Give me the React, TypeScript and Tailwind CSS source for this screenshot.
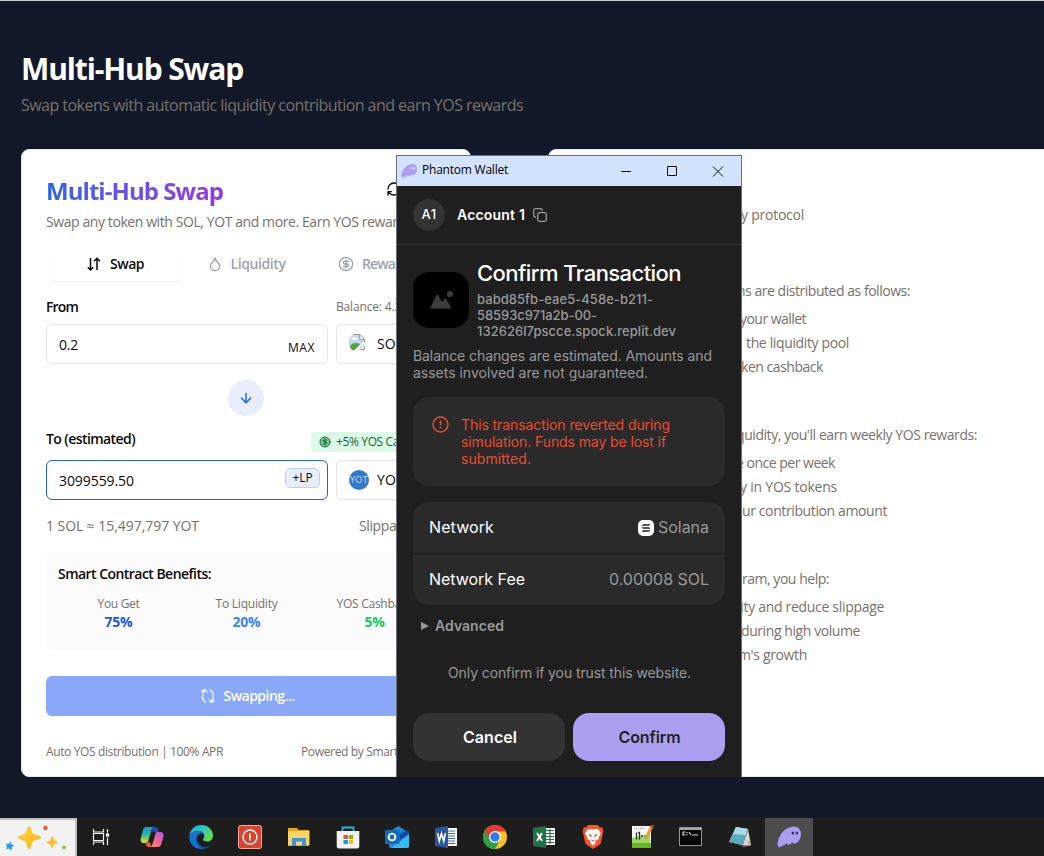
import { useLayoutEffect, useRef, useState } from "react";
import type { ReactNode } from "react";
import { ArrowDown, CircleDollarSign, Droplet } from "lucide-react";

/* Single line of text tracked so that it spans the given width in pixels. */
function Fit({ w, className = "", children }: { w: number; className?: string; children: string }) {
  const ref = useRef<HTMLSpanElement>(null);
  const [spacing, setSpacing] = useState<number | null>(null);
  useLayoutEffect(() => {
    if (ref.current && spacing === null) {
      const natural = ref.current.getBoundingClientRect().width;
      setSpacing((w - natural) / children.length);
    }
  }, [w, children, spacing]);
  return (
    <span
      ref={ref}
      className={`inline-block shrink-0 whitespace-nowrap ${className}`}
      style={spacing === null ? undefined : { letterSpacing: `${spacing}px` }}
    >
      {children}
    </span>
  );
}

function Ghost({ className, eye }: { className: string; eye: string }) {
  return (
    <svg viewBox="0 0 24 24" className={className}>
      <path
        d="M2 22C-.5 21 .5 15.500 3 11 6 5 12 1.500 17 1.500c4 0 7 3 7 7.500 0 5-3.500 9.500-6.500 9.500-1.200 0-1.800-.6-2-1.500-1 1.500-2.300 2.800-3.800 2.800-1.300 0-2-.8-2-1.800C8 20.200 6.500 21 5.300 20.200 4.500 21.500 3.300 22.500 2 22Z"
        fill="#ab9ff2"
      />
      <ellipse cx="15.800" cy="8" rx="1.200" ry="1.600" fill={eye} />
      <ellipse cx="19.800" cy="8" rx="1.200" ry="1.600" fill={eye} />
    </svg>
  );
}

function Benefit({ label, w, value, vw, color }: { label: string; w: number; value: string; vw: number; color: string }) {
  return (
    <div className="flex flex-col items-center pl-px">
      <Fit w={w} className="text-xs leading-4 text-[#78716c]">{label}</Fit>
      <Fit w={vw} className={`text-sm leading-5 font-bold ${color}`}>{value}</Fit>
    </div>
  );
}

function SwapCard() {
  return (
    <section className="flex h-[628px] w-[450px] shrink-0 flex-col rounded-lg border border-[#e2e8f0] bg-white px-6 pt-[25px] text-[#0c0a09]">
      <div className="flex h-8 items-center justify-between">
        <Fit w={177} className="bg-gradient-to-r from-[#2563eb] to-[#9333ea] bg-clip-text text-2xl leading-8 font-bold text-transparent">
          Multi-Hub Swap
        </Fit>
        <svg viewBox="0 0 24 24" className="mr-[44px] mb-1 h-4 w-4" fill="none" stroke="#0c0a09" strokeWidth="2" strokeLinecap="round" strokeLinejoin="round">
          <path d="M3 12a9 9 0 0 1 9-9 9.750 9.750 0 0 1 6.740 2.740L21 8M21 3v5h-5M21 12a9 9 0 0 1-9 9 9.750 9.750 0 0 1-6.740-2.740L3 16M8 16H3v5" />
        </svg>
      </div>
      <Fit w={366} className="mt-[5px] self-start text-sm leading-5 text-[#78716c]">
        Swap any token with SOL, YOT and more. Earn YOS rewards
      </Fit>

      <div className="mt-[15px] grid h-[34px] grid-cols-[132px_132px_132px] px-1 text-sm font-semibold text-[#9ca3af]">
        <div className="flex items-center justify-center gap-2 rounded-sm bg-white pr-0.5 text-[#0c0a09] shadow-[0_1px_2px_rgba(0,0,0,0.06)]">
          <svg viewBox="0 0 16 16" className="h-4 w-4" fill="none" stroke="currentColor" strokeWidth="1.500">
            <path d="M4.500 2v12M1.800 11.300 4.500 14l2.700-2.700M11 14V2.500M8 5.200l3-2.900 3 2.900" />
          </svg>
          <Fit w={34}>Swap</Fit>
        </div>
        <div className="flex items-center justify-center gap-2 pr-3 pl-2">
          <Droplet className="h-4 w-4" />
          <Fit w={55}>Liquidity</Fit>
        </div>
        <div className="flex items-center justify-center gap-2 pr-2">
          <CircleDollarSign className="h-4 w-4" />
          <Fit w={52}>Rewards</Fit>
        </div>
      </div>

      <div className="mt-4 flex h-5 items-center justify-between">
        <Fit w={32} className="text-sm font-semibold">From</Fit>
        <Fit w={110} className="text-xs text-[#78716c]">Balance: 4.3571 SOL</Fit>
      </div>
      <div className="mt-[7px] grid h-10 grid-cols-[282px_110px] gap-2">
        <div className="flex items-center justify-between rounded-md border border-[#e5e5e5] px-3 text-sm">
          <Fit w={19} className="pt-0.5">0.2</Fit>
          <Fit w={27} className="pt-2 text-xs font-medium">MAX</Fit>
        </div>
        <div className="flex items-center gap-3 rounded-md border border-[#e5e5e5] px-3 text-sm">
          <svg viewBox="0 0 16 16" className="-mt-1 h-4 w-4">
            <path d="M3 1h8l4.500 4v6L11 16H3L0 12V5Z" fill="#c3d5f2" />
            <path d="M1 13c.6-3.500 5-5 8.500-3.500l1.500 1L6 16H3Z" fill="#4fa52e" />
            <path d="m10.500.5.3 5 5-.3Z" fill="#f8f8f8" stroke="#8b8b8b" strokeWidth=".8" />
            <path d="M4 .5h7M15.500 5v4M11.500 15.500h4V12" fill="none" stroke="#9a9a9a" />
            <ellipse cx="5.500" cy="4.500" rx="3" ry="1.500" fill="white" />
            <path d="m16 8.500-7 7.500H6L14 8Z" fill="white" />
          </svg>
          <Fit w={26}>SOL</Fit>
        </div>
      </div>

      <div className="mt-4 flex h-9 w-9 items-center justify-center self-center rounded-full bg-[#e8eefe]">
        <ArrowDown className="h-4 w-4 text-[#1a5af5]" />
      </div>

      <div className="mt-[13px] flex h-5 items-center justify-between">
        <Fit w={89} className="text-sm font-semibold">To (estimated)</Fit>
        <div className="mt-[6px] flex h-5 w-[135px] items-center gap-[5px] rounded-sm bg-[#dcfce7] pl-2 text-[#166534]">
          <CircleDollarSign className="h-3 w-3 shrink-0" fill="#86c9a0" />
          <Fit w={100} className="text-xs">+5% YOS Cashback</Fit>
        </div>
      </div>
      <div className="mt-[11px] grid h-10 grid-cols-[282px_110px] gap-2">
        <div className="flex items-center justify-between rounded-md border border-[#2560e8] pr-[7px] pl-3 text-sm">
          <Fit w={75} className="pt-0.5">3099559.50</Fit>
          <div className="-mt-1 flex h-5 w-[35px] items-center justify-center rounded-md border border-[#bacdfc] bg-[#e8eefe] text-xs">
            <Fit w={20}>+LP</Fit>
          </div>
        </div>
        <div className="flex items-center gap-2 rounded-md border border-[#e5e5e5] px-3 text-sm">
          <div className="flex h-5 w-5 shrink-0 items-center justify-center overflow-hidden rounded-full bg-[#3178cf] text-[9px] text-[#c5e0ff]">
            <Fit w={18}>YOT</Fit>
          </div>
          <Fit w={27}>YOT</Fit>
        </div>
      </div>
      <div className="mt-4 flex h-5 items-center justify-between pr-[35px] text-sm text-[#78716c]">
        <Fit w={153}>1 SOL ≈ 15,497,797 YOT</Fit>
        <Fit w={52}>Slippage</Fit>
      </div>

      <div className="mt-4 flex h-[99px] shrink-0 flex-col items-start rounded-lg bg-[#fcfcfc] px-3 pt-3">
        <Fit w={153} className="text-sm leading-5 font-semibold">Smart Contract Benefits:</Fit>
        <div className="mt-3 grid grid-cols-[120px_120px_120px] gap-2">
          <Benefit label="You Get" w={42} value="75%" vw={28} color="text-[#1a56e8]" />
          <Benefit label="To Liquidity" w={62} value="20%" vw={28} color="text-[#3b82f6]" />
          <Benefit label="YOS Cashback" w={76} value="5%" vw={20} color="text-[#22c55e]" />
        </div>
      </div>

      <div className="mt-[25px] flex h-10 shrink-0 items-center justify-center gap-2 rounded-md bg-[#89a8f9] pl-0.5 text-sm font-semibold text-white">
        <svg viewBox="0 0 16 16" className="h-4 w-4 opacity-80" fill="none" stroke="currentColor" strokeWidth="1.500">
          <path d="M6 14.500C1.500 12.500 1.500 6 4.500 2.500M1.500 3.500l3.300-2 2.200 3M9.500 2c4.500 1.500 5 8 2 11.500M14.500 12.500l-3.300 2-2.200-3" />
        </svg>
        <Fit w={71}>Swapping...</Fit>
      </div>
      <div className="mt-7 flex h-4 items-center justify-between text-xs text-[#78716c]">
        <Fit w={177}>Auto YOS distribution | 100% APR</Fit>
        <Fit w={145}>Powered by Smart Contract</Fit>
      </div>
    </section>
  );
}

type Part = { text: string; w: number; end: string };

const intro: Part[] = [{ text: "y protocol", w: 63, end: "w-[255px]" }];
const distribution: Part[] = [
  { text: "your wallet", w: 66, end: "w-[257px]" },
  { text: "the liquidity pool", w: 103, end: "w-[300px]" },
  { text: "ken cashback", w: 82, end: "w-[274px]" },
];
const weekly: Part[] = [
  { text: "e once per week", w: 99, end: "w-[286px]" },
  { text: "y in YOS tokens", w: 97, end: "w-[288px]" },
  { text: "ur contribution amount", w: 145, end: "w-[338px]" },
];
const support: Part[] = [
  { text: "lity and reduce slippage", w: 147, end: "w-[335px]" },
  { text: "during high volume", w: 119, end: "w-[311px]" },
  { text: "m's growth", w: 69, end: "w-[258px]" },
];

function Rows({ parts }: { parts: Part[] }) {
  return (
    <>
      {parts.map((p) => (
        <div key={p.text} className={`flex h-6 items-center justify-end ${p.end}`}>
          <Fit w={p.w}>{p.text}</Fit>
        </div>
      ))}
    </>
  );
}

function InfoCard() {
  return (
    <section className="h-[628px] w-[520px] shrink-0 rounded-lg border border-[#e2e8f0] bg-white pt-[53px] text-sm text-[#78716c]">
      <Rows parts={intro} />
      <div className="mt-[52px] flex h-6 w-[361px] items-center justify-end">
        <Fit w={173}>ns are distributed as follows:</Fit>
      </div>
      <div className="mt-1"><Rows parts={distribution} /></div>
      <div className="mt-11 flex h-6 w-[428px] items-center justify-end">
        <Fit w={241}>quidity, you'll earn weekly YOS rewards:</Fit>
      </div>
      <div className="mt-1"><Rows parts={weekly} /></div>
      <div className="mt-11 flex h-6 w-[280px] items-center justify-end">
        <Fit w={87}>ram, you help:</Fit>
      </div>
      <div className="mt-1"><Rows parts={support} /></div>
    </section>
  );
}

function WalletWindow() {
  return (
    <div className="absolute top-[154px] left-[396px] flex h-[622px] w-[346px] flex-col border-x border-t border-[#6b6f76] bg-[#1f1f1f] font-['Inter',sans-serif]">
      <div className="flex h-[30px] shrink-0 items-center bg-[#d3e2fd] pl-1 font-['Open_Sans',sans-serif] text-xs text-black">
        <Ghost className="h-4 w-4" eye="#ece9ff" />
        <Fit w={86} className="-mt-0.5 ml-[5px]">Phantom Wallet</Fit>
        <svg viewBox="0 0 120 12" className="ml-[110px] h-3 w-[120px]" fill="none" stroke="#111">
          <path d="M3 6.500h10M49.500 1.500h9v9h-9zM95 1.500l10 10M105 1.500l-10 10" />
        </svg>
      </div>
      <div className="flex h-[59px] shrink-0 items-center border-b border-[#333333] pl-4">
        <div className="flex h-8 w-8 items-center justify-center rounded-full bg-[#333333] text-[13px] font-medium text-white">
          <Fit w={15}>A1</Fit>
        </div>
        <Fit w={68} className="ml-3 text-sm font-semibold text-white">Account 1</Fit>
        <svg viewBox="0 0 14 14" className="ml-2 h-3.5 w-3.5" fill="none" stroke="#999" strokeWidth="1.300">
          <rect x="4.700" y="4.700" width="8.600" height="8.600" rx="1.800" />
          <path d="M3 9.200h-.5A1.800 1.800 0 0 1 .7 7.400V2.500A1.800 1.800 0 0 1 2.500.7h4.900a1.800 1.800 0 0 1 1.800 1.800V3" />
        </svg>
      </div>

      <div className="flex flex-1 flex-col px-4">
        <div className="flex gap-2 pt-[15px]">
          <div className="mt-3 flex h-14 w-14 shrink-0 items-center justify-center rounded-2xl bg-black">
            <svg viewBox="0 0 24 20" className="h-5 w-6" fill="#3d3d3d">
              <path d="M1 18.500 7.500 5c.5-.8 1-.8 1.500 0l4 7 2.500-3c.6-.7 1.100-.7 1.600 0l5.400 9.500Z" />
              <circle cx="21" cy="4" r="3" />
            </svg>
          </div>
          <div className="flex flex-col text-[13px] leading-4 font-medium text-[#999999]">
            <Fit w={204} className="h-[31px] text-[22px] leading-[27px] text-white">Confirm Transaction</Fit>
            <Fit w={176} className="self-start">babd85fb-eae5-458e-b211-</Fit>
            <Fit w={120} className="self-start">58593c971a2b-00-</Fit>
            <Fit w={199} className="self-start">132626l7pscce.spock.replit.dev</Fit>
          </div>
        </div>
        <div className="mt-2 flex flex-col items-start text-sm leading-[17px] text-[#999999]">
          <Fit w={299}>Balance changes are estimated. Amounts and</Fit>
          <Fit w={235}>assets involved are not guaranteed.</Fit>
        </div>

        <div className="mt-4 flex h-[89px] gap-3 rounded-2xl bg-[#2a2a2a] pt-[19px] pl-[19px]">
          <svg viewBox="0 0 17 17" className="h-[17px] w-[17px] shrink-0" fill="none" stroke="#eb4a30" strokeWidth="1.500">
            <circle cx="8.500" cy="8.500" r="7.500" />
            <path d="M8.500 4.500v4.700M8.500 10.800v1.700" strokeWidth="1.700" />
          </svg>
          <div className="flex flex-col items-start text-sm leading-[17px] text-[#eb4a30]">
            <Fit w={209}>This transaction reverted during</Fit>
            <Fit w={205}>simulation. Funds may be lost if</Fit>
            <Fit w={70}>submitted.</Fit>
          </div>
        </div>

        <div className="mt-4 h-[103px] shrink-0 overflow-hidden rounded-2xl bg-[#2a2a2a] text-base">
          <div className="flex h-[52px] items-center justify-between border-b border-[#1f1f1f] px-4 pb-0.5">
            <Fit w={65} className="text-white">Network</Fit>
            <div className="flex items-center gap-1">
              <svg viewBox="0 0 16 16" className="mt-0.5 h-4 w-4">
                <rect width="16" height="16" rx="5" fill="white" />
                <path d="M5 4.200h7.500L11 5.700H3.500ZM3.500 7.200H11l1.500 1.500H5ZM5 10.200h7.500L11 11.700H3.500Z" fill="#222" />
              </svg>
              <Fit w={51} className="text-[#999999]">Solana</Fit>
            </div>
          </div>
          <div className="flex h-[51px] items-center justify-between px-4 pb-0.5">
            <Fit w={96} className="text-white">Network Fee</Fit>
            <Fit w={100} className="text-[#999999]">0.00008 SOL</Fit>
          </div>
        </div>

        <div className="mt-[11px] flex h-5 items-center gap-1.5 pl-2 text-sm font-semibold text-[#999999]">
          <svg viewBox="0 0 8 8" className="h-2 w-2" fill="#999"><path d="M0 0l8 4-8 4Z" /></svg>
          <Fit w={69}>Advanced</Fit>
        </div>
        <Fit w={243} className="mt-[27px] ml-px self-center text-sm leading-5 text-[#999999]">
          Only confirm if you trust this website.
        </Fit>
        <div className="mt-[30px] grid h-12 shrink-0 grid-cols-2 gap-2 text-base font-semibold">
          <button className="rounded-2xl bg-[#333333] pl-0.5 text-white"><Fit w={54}>Cancel</Fit></button>
          <button className="rounded-2xl bg-[#ab9ff2] pl-px text-[#1f1f1f]"><Fit w={62}>Confirm</Fit></button>
        </div>
      </div>
    </div>
  );
}

function Ic({ children, className = "w-[49px]" }: { children: ReactNode; className?: string }) {
  return (
    <div className={`flex shrink-0 items-center justify-center ${className}`}>
      <svg viewBox="0 0 24 24" className="h-6 w-6">{children}</svg>
    </div>
  );
}

function Taskbar() {
  return (
    <div className="mt-[41px] flex h-[38px] shrink-0 bg-[#1d1d1d]">
      <div className="w-[77px] shrink-0 border-t-2 border-r-2 border-[#c0c0c0] bg-[#f2f2f2]">
        <svg viewBox="0 0 75 36" className="h-9 w-[75px]">
          <defs>
            <linearGradient id="star" x1="0" y1="0" x2="1" y2="1">
              <stop offset="0" stopColor="#ffd94a" />
              <stop offset="1" stopColor="#f7b00c" />
            </linearGradient>
          </defs>
          <path d="M29 6c2.200 0 2.200 6 4 7.500 2 1.700 8 2 8 4s-6 2-8 4-2 7.500-4 7.500-2-5.500-4-7.500-7-2-7-4 5-2.300 7-4S27 6 29 6Z" fill="url(#star)" />
          <path d="M52 16c1 0 1.500 3.500 2.500 4.500S58 21.500 58 22.300 55 23.500 54 24.500 53 28 52 28s-1-2.500-2-3.500-3.500-1-3.500-2 2.500-1.200 3.500-2 1-4.500 2-4.500Z" fill="#fbc12c" />
          <path d="m10.500 21.500.8 3 3 1-2.500 1.800-.3 3.200-2.500-2-3 .5 1.200-2.700-1.700-2.600 3.300.2Z" fill="#19a3ea" />
          <circle cx="45.500" cy="8" r="2.200" fill="#ee5a2b" />
          <circle cx="64" cy="27.500" r="2" fill="#8bc53f" />
        </svg>
      </div>
      <Ic className="w-[48px]">
        <path d="M4.500 4v3h10V4M4.500 20v-3h10v3M4.500 8.500h10v7h-10zM18.500 4v16" fill="none" stroke="#f5f5f5" strokeWidth="1.200" />
        <path d="M16.500 8h4v4h-4z" fill="#fff" stroke="#1d1d1d" strokeWidth=".8" />
      </Ic>
      <Ic className="ml-[2px] w-[49px]">
        <defs>
          <linearGradient id="coA" x1="0" y1="0" x2="0" y2="1"><stop stopColor="#1c93ea" /><stop offset=".5" stopColor="#2fb89a" /><stop offset="1" stopColor="#f0dc26" /></linearGradient>
          <linearGradient id="coB" x1="1" y1="0" x2="0" y2="1"><stop stopColor="#a45cf0" /><stop offset=".5" stopColor="#f0629a" /><stop offset="1" stopColor="#ff9a4a" /></linearGradient>
        </defs>
        <path d="M12.500 2H15c2 0 2.700 1 3.200 3l.6 2.500h-4c-1.500 0-2.300-1.200-2.700-3Z" fill="#1a4fc0" />
        <path d="M6 2h8c-1.300 0-2 1-2.500 3L8.500 15c-.7 2.300-1.500 3-3.500 3H4c-3 0-4-2-3.200-5L3 5c.6-2 1.300-3 3-3Z" fill="url(#coA)" />
        <path d="M11.500 22H9c-2 0-2.700-1-3.200-3l-.4-1c2 0 3 0 3.600-1.500l1.500 2Z" fill="#ee5a34" />
        <path d="M18 22h-8c1.300 0 2-1 2.500-3l3-10c.5-1.600 1-2 2.500-2h2.500c3 0 3.500 2.500 2.800 5l-2 7C20.700 21 19.700 22 18 22Z" fill="url(#coB)" />
      </Ic>
      <Ic>
        <defs>
          <linearGradient id="edA" x1="0" y1="0" x2="1" y2=".5"><stop stopColor="#1ba5dc" /><stop offset=".55" stopColor="#2dc6c4" /><stop offset="1" stopColor="#62dd4a" /></linearGradient>
        </defs>
        <path d="M.5 11C1 4.500 6 0 12 0c7 0 12 5 12 10.500 0 4-3 6-6 6-2.500 0-4.500-1-4-2.500 1-1 1.300-2 1.300-3C15.300 8 12.500 6 9 6 5 6 2 8 .5 11Z" fill="url(#edA)" />
        <path d="M.4 10.500C2 7.500 5 6 9 6c3 0 5 1.300 6 3-4-2-8 1-7.500 6 .5 5 4.500 8 8.500 8.300-1.200.5-2.600.7-4 .7C5 24-.5 18 .4 10.500Z" fill="#1273cf" />
        <path d="M9 11c-2 4 0 9 5 10.500 3 1 6 .2 8.500-2.500-2.500 4.500-7 5-8.500 4.800C9 22.500 7.500 19 7.500 15.500c0-1.500.5-3.300 1.500-4.500Z" fill="#0c4f9e" />
      </Ic>
      <Ic>
        <rect x=".5" y=".5" width="23" height="23" rx="2" fill="#d9432d" stroke="#f0ada0" />
        <circle cx="12" cy="12" r="7" fill="none" stroke="#fff" strokeWidth="1.400" />
        <path d="M12 8.500v7" stroke="#fff" strokeWidth="1.600" />
      </Ic>
      <Ic>
        <path d="M1 3h9l1.500 2H22v16H1z" fill="#e7a51c" />
        <path d="M1 6h21.500v14H1z" fill="#fcd462" />
        <path d="M5 21v-8h14v8h-4v-4.500H9V21z" fill="#3e92da" />
      </Ic>
      <Ic>
        <path d="M6.500 7V2.500h11V7" fill="none" stroke="#26b4e8" strokeWidth="1.800" />
        <path d="M.7 6h22.600v15a2.500 2.500 0 0 1-2.500 2.500H3.200A2.500 2.500 0 0 1 .7 21Z" fill="#f2f2f2" />
        <path d="M7.500 10H12v4H7.500z" fill="#f25022" /><path d="M13 10h4v4h-4z" fill="#7fba00" />
        <path d="M7.500 15H12v4H7.500z" fill="#00a4ef" /><path d="M13 15h4v4h-4z" fill="#ffb900" />
      </Ic>
      <Ic>
        <path d="M4 7 13.500 1 24 8v13a2 2 0 0 1-2 2H6a2 2 0 0 1-2-2Z" fill="#1c8ae0" />
        <path d="m14 9 9-4 1 4-9 6Z" fill="#134b9b" />
        <path d="M24 9.500V21a2 2 0 0 1-2 2H6Z" fill="#35bdf2" />
        <rect x="0" y="5" width="14.500" height="14" rx="1" fill="#0f6cbd" />
        <circle cx="7" cy="12" r="3.400" fill="none" stroke="#fff" strokeWidth="1.900" />
      </Ic>
      <Ic>
        <path d="M13 3h10v18H13z" fill="#fff" />
        <path d="M14 6h7M14 8.500h7M14 11h7M14 13.500h7M14 16h7M14 18.500h7" stroke="#4169ad" />
        <path d="M1 3 14 1v22L1 21Z" fill="#2b579a" />
        <path d="m3.500 8 1.800 8 2.200-7.500L9.700 16l1.800-8" fill="none" stroke="#fff" strokeWidth="1.600" />
      </Ic>
      <Ic>
        <circle cx="12" cy="12" r="12" fill="#fbc116" />
        <path d="M12 12 6.800 15 1.600 6A12 12 0 0 1 22.400 6L22.400 6.500H12Z" fill="#e33b2e" />
        <path d="M1.600 6A12 12 0 0 0 12 24l5.200-9H12L6.800 15Z" fill="#2aa147" />
        <circle cx="12" cy="12" r="6" fill="#fff" />
        <circle cx="12" cy="12" r="4.700" fill="#2f7de9" />
      </Ic>
      <Ic>
        <path d="M13 3h10v17H13z" fill="#fff" />
        <path d="M14 5.500h8M14 8.500h8M14 11.500h8M14 14.500h8M14 17.500h8M18 4v15" stroke="#217346" strokeWidth="1.200" />
        <path d="M1 3 14 1v22L1 21Z" fill="#217346" />
        <path d="m5 8 5 8M10 8l-5 8" stroke="#fff" strokeWidth="1.900" />
      </Ic>
      <Ic>
        <path d="M7 0h10l2 2.500 2-.3 1.300 3L22 8l-2.500 11L12 24l-7.500-5L2 8l-.3-2.800L3 2.200l2 .3Z" fill="#fb542b" />
        <path d="m6.500 4.500 3-.8 2.500.8 2.500-.8 3 .8 2.500 4-2.200 3.500.2 2-4 2 1 1.800L12 20.500l-3-2.700 1-1.800-4-2 .2-2L4 8.500Z" fill="#fff" />
        <path d="m7 9 3.500.8v3ZM17 9l-3.500.8v3ZM9.500 14.500l2.500.8 2.500-.8-2.500 2Z" fill="#fb542b" />
      </Ic>
      <Ic>
        <path d="M2 1h19v22H2z" fill="#fafafa" />
        <path d="M2 13 20 9v14H2Z" fill="#9bd86a" />
        <path d="M2 18h19v5H2z" fill="#66b61e" />
        <path d="M4 3.500h12" stroke="#bbb" strokeWidth="2" strokeDasharray="1 1" />
        <path d="M6.500 7.500v7M8 7.500h1.500v7M11 11h2M14.500 11h1" fill="none" stroke="#333" strokeWidth="1.300" />
        <path d="M21.500 2 15.500 14" stroke="#e6a020" strokeWidth="3" /><path d="m22.800 0-1.500 3" stroke="#d03b2a" strokeWidth="3" />
      </Ic>
      <Ic>
        <path d="M.5 2.500h22v18H.5z" fill="#050505" stroke="#969696" />
        <path d="M1 4h21" stroke="#ddd" strokeWidth="1.500" />
        <path d="M6.500 7H4v3h2.500M8 7v1M8 9v1M10 7l2 3M13 10h6" fill="none" stroke="#ddd" strokeWidth="1.200" />
      </Ic>
      <Ic>
        <path d="m8 2 12 2 3 16-4 1L1 17Z" fill="#d3d9dc" />
        <path d="m8 2 11.500 2-5 16L1 16.500Z" fill="#5aabc0" />
        <path d="m8 2 11.500 2-2 6L5 9Z" fill="#a7dce5" />
        <path d="m1 16.500 13.500 3.500 5.500-15M14 20l1 1.500 8-1.500" fill="none" stroke="#7c8d91" />
        <path d="m20 16 2 3" stroke="#d6a642" strokeWidth="2" />
      </Ic>
      <div className="ml-px flex w-12 shrink-0 items-center justify-center bg-[#4c4c4c]">
        <Ghost className="h-6 w-6" eye="#302b50" />
      </div>
    </div>
  );
}

export default function App() {
  return (
    <div className="relative flex h-[856px] w-[1044px] flex-col overflow-hidden border-t border-[#c9ccd1] bg-[#111827] font-['Open_Sans',sans-serif]">
      <header className="flex h-[148px] shrink-0 flex-col items-start pt-[50px] pl-[21px]">
        <Fit w={222} className="text-[30px] leading-9 font-bold text-white">Multi-Hub Swap</Fit>
        <Fit w={502} className="mt-[6px] text-base leading-6 text-[#78716c]">
          Swap tokens with automatic liquidity contribution and earn YOS rewards
        </Fit>
      </header>
      <main className="flex h-[628px] shrink-0 gap-[77px] pl-[21px]">
        <SwapCard />
        <InfoCard />
      </main>
      <Taskbar />
      <WalletWindow />
    </div>
  );
}
